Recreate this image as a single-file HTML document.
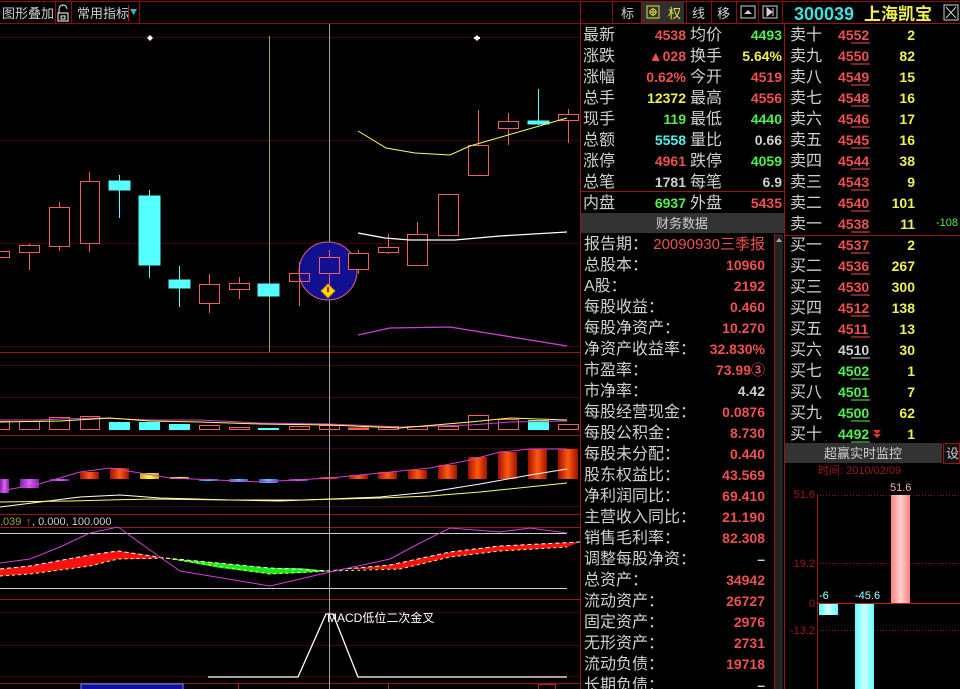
<!DOCTYPE html>
<html><head><meta charset="utf-8"><style>
html,body{margin:0;padding:0;background:#000;width:960px;height:689px;overflow:hidden}
svg{display:block;font-family:"Liberation Sans","Noto Sans CJK SC",sans-serif}
</style></head><body>
<svg width="960" height="689" viewBox="0 0 960 689" xmlns="http://www.w3.org/2000/svg">
<defs>
<linearGradient id="og" x1="0" x2="1" y1="0" y2="0"><stop offset="0" stop-color="#a01000"/><stop offset="0.5" stop-color="#ff5a10"/><stop offset="1" stop-color="#a01000"/></linearGradient>
<linearGradient id="mg" x1="0" x2="1"><stop offset="0" stop-color="#8020a0"/><stop offset="0.5" stop-color="#e060ff"/><stop offset="1" stop-color="#8020a0"/></linearGradient>
<linearGradient id="yg" x1="0" x2="1"><stop offset="0" stop-color="#d0a000"/><stop offset="0.5" stop-color="#ffff40"/><stop offset="1" stop-color="#d0a000"/></linearGradient>
<linearGradient id="bg" x1="0" x2="1"><stop offset="0" stop-color="#2060c0"/><stop offset="0.5" stop-color="#60d0ff"/><stop offset="1" stop-color="#2060c0"/></linearGradient>
<linearGradient id="pk" x1="0" x2="1"><stop offset="0" stop-color="#ff8080"/><stop offset="0.5" stop-color="#ffd0d0"/><stop offset="1" stop-color="#ff8080"/></linearGradient>
<linearGradient id="cy" x1="0" x2="1"><stop offset="0" stop-color="#60ffff"/><stop offset="0.5" stop-color="#d0ffff"/><stop offset="1" stop-color="#60ffff"/></linearGradient>
</defs>

<line x1="0" y1="1.5" x2="960" y2="1.5" stroke="#8a1010"/>
<line x1="0" y1="23.5" x2="580" y2="23.5" stroke="#8a1010"/>
<line x1="55.5" y1="2" x2="55.5" y2="23" stroke="#8a1010"/>
<line x1="71.5" y1="2" x2="71.5" y2="23" stroke="#8a1010"/>
<line x1="139.5" y1="2" x2="139.5" y2="23" stroke="#8a1010"/>
<text x="2" y="18" fill="#d0d0d0" font-size="13">图形叠加</text>
<path d="M59 13 v-4 a4 4 0 0 1 8 0 M58 13 h10 v8 h-10z M61 16 h4 v3 h-4z" stroke="#d0d0d0" fill="none" stroke-width="1.2"/>
<text x="77" y="18" fill="#d0d0d0" font-size="13">常用指标</text>
<line x1="128.5" y1="5" x2="128.5" y2="21" stroke="#c02020"/>
<path d="M130 9 h7 l-3.5 6z" fill="#20c0c0"/>

<g stroke="#3a0808">
<line x1="0" y1="37.5" x2="580" y2="37.5"/><line x1="0" y1="140.5" x2="580" y2="140.5"/>
<line x1="0" y1="243.5" x2="580" y2="243.5"/><line x1="0" y1="346.5" x2="580" y2="346.5"/>
<line x1="0" y1="365.5" x2="580" y2="365.5"/><line x1="0" y1="397.5" x2="580" y2="397.5"/>
<line x1="0" y1="448.5" x2="580" y2="448.5"/><line x1="0" y1="612.5" x2="580" y2="612.5"/>
<line x1="0" y1="645.5" x2="580" y2="645.5"/><line x1="0" y1="676.5" x2="580" y2="676.5"/>
<line x1="0" y1="506.5" x2="580" y2="506.5"/>
</g>
<g stroke="#9a1515">
<line x1="0" y1="352.5" x2="580" y2="352.5"/><line x1="0" y1="435.5" x2="580" y2="435.5"/>
<line x1="0" y1="514.5" x2="580" y2="514.5"/><line x1="0" y1="527.5" x2="580" y2="527.5"/>
<line x1="0" y1="599.5" x2="580" y2="599.5"/><line x1="0" y1="683.5" x2="580" y2="683.5"/>
</g>
<line x1="269.5" y1="36" x2="269.5" y2="352" stroke="#a0a040"/>
<line x1="329.5" y1="24" x2="329.5" y2="689" stroke="#a0a0a0"/>
<path d="M150 35 l3 3 -3 3 -3 -3z" fill="#fff"/>
<path d="M477 35 l3 3 -3 3 -3 -3z M474 37h6v2h-6z" fill="#fff"/>

<ellipse cx="328" cy="271" rx="29" ry="29" fill="#101090" stroke="#e06080"/>

<g stroke="#f06060" fill="none">
<rect x="-2.5" y="251.5" width="12" height="6"/>
<line x1="29.5" y1="244" x2="29.5" y2="270"/><rect x="19.5" y="245.5" width="20" height="7" fill="#000"/>
<line x1="59.5" y1="202" x2="59.5" y2="251"/><rect x="49.5" y="207.5" width="20" height="39" fill="#000"/>
<line x1="89.5" y1="172" x2="89.5" y2="252"/><rect x="80.5" y="181.5" width="19" height="62" fill="#000"/>
<line x1="209.5" y1="274" x2="209.5" y2="313"/><rect x="199.5" y="284.5" width="20" height="19" fill="#000"/>
<line x1="239.5" y1="277" x2="239.5" y2="299"/><rect x="229.5" y="283.5" width="20" height="6" fill="#000"/>
<line x1="299.5" y1="262" x2="299.5" y2="306"/><rect x="289.5" y="273.5" width="20" height="8" fill="none"/>
<line x1="329.5" y1="250" x2="329.5" y2="292"/><rect x="319.5" y="257.5" width="20" height="16" fill="#101090"/>
<line x1="358.5" y1="250" x2="358.5" y2="274"/><rect x="348.5" y="253.5" width="20" height="16" fill="#000"/>
<line x1="388.5" y1="234" x2="388.5" y2="254"/><rect x="378.5" y="247.5" width="20" height="5" fill="#000"/>
<line x1="417.5" y1="222" x2="417.5" y2="234"/><rect x="407.5" y="234.5" width="20" height="31" fill="#000"/>
<rect x="438.5" y="194.5" width="20" height="41"/>
<line x1="478.5" y1="110" x2="478.5" y2="145"/><rect x="468.5" y="145.5" width="20" height="30" fill="#000"/>
<line x1="508.5" y1="113" x2="508.5" y2="145"/><rect x="498.5" y="121.5" width="20" height="7" fill="#000"/>
<line x1="568.5" y1="109" x2="568.5" y2="143"/><rect x="558.5" y="114.5" width="20" height="6" fill="#000"/>
</g>
<g fill="#55ffff" stroke="#55ffff">
<line x1="119.5" y1="175" x2="119.5" y2="218"/><rect x="109" y="181" width="21" height="9"/>
<line x1="149.5" y1="190" x2="149.5" y2="278"/><rect x="139" y="196" width="21" height="69"/>
<line x1="179.5" y1="266" x2="179.5" y2="307"/><rect x="169" y="280" width="21" height="8"/>
<rect x="258" y="284" width="21" height="12"/>
<line x1="538.5" y1="89" x2="538.5" y2="125"/><rect x="528" y="121" width="21" height="3"/>
</g>
<path d="M328 284 l7 7 -7 7 -7 -7z" fill="#ffe000" stroke="#c08000"/>
<rect x="327" y="287" width="2" height="5" fill="#e00000"/>
<polyline points="358,131 386,148 415,153 450,155 470,146 567,118" fill="none" stroke="#ffff60"/>
<polyline points="358,233 385,238 410,240 455,240 500,236 567,232" fill="none" stroke="#ffffff" stroke-width="1.3"/>
<polyline points="358,335 390,328 450,327 567,346" fill="none" stroke="#d040d0" stroke-width="1.3"/>

<g stroke="#f06060" fill="none">
<rect x="-2.5" y="421.5" width="12" height="8"/><rect x="19.5" y="421.5" width="20" height="8"/>
<rect x="49.5" y="417.5" width="20" height="12"/><rect x="80.5" y="416.5" width="19" height="13"/>
<rect x="199.5" y="425.5" width="20" height="4"/><rect x="229.5" y="427.5" width="20" height="2"/>
<rect x="289.5" y="426.5" width="20" height="3"/><rect x="319.5" y="425.5" width="20" height="4"/>
<rect x="348.5" y="428" width="20" height="1.5" fill="#f06060"/>
<rect x="378.5" y="426.5" width="20" height="3"/><rect x="407.5" y="426.5" width="20" height="3"/>
<rect x="438.5" y="426.5" width="20" height="3"/><rect x="468.5" y="415.5" width="20" height="14"/>
<rect x="498.5" y="419.5" width="20" height="10"/><rect x="558.5" y="424.5" width="20" height="5"/>
</g>
<g fill="#55ffff"><rect x="109" y="422" width="21" height="8"/><rect x="139" y="422" width="21" height="8"/><rect x="169" y="424" width="21" height="6"/><rect x="258" y="428" width="21" height="2"/><rect x="528" y="420" width="21" height="10"/></g>
<rect x="528" y="420" width="21" height="3" fill="#60ff90"/>
<polyline points="0,420 40,420 60,419 100,418 150,420 200,420 260,423 330,424 400,427 470,425 510,422 567,421" fill="none" stroke="#d040d0"/>
<polyline points="0,422 60,421 110,418 150,421 200,422 260,424 330,425 400,428 470,422 510,418 567,420" fill="none" stroke="#ffff60"/>

<rect x="0" y="479" width="9" height="14" fill="url(#mg)"/>
<rect x="20" y="479" width="19" height="9" fill="url(#mg)"/>
<rect x="50" y="479" width="19" height="2" fill="url(#mg)"/>
<rect x="80" y="472" width="19" height="7" fill="url(#og)"/>
<rect x="110" y="468" width="19" height="11" fill="url(#og)"/>
<rect x="140" y="473" width="19" height="6" fill="url(#yg)"/>
<rect x="170" y="477" width="19" height="2" fill="url(#yg)"/>
<rect x="199" y="479" width="19" height="2" fill="url(#bg)"/>
<rect x="229" y="479" width="19" height="3" fill="url(#bg)"/>
<rect x="259" y="479" width="19" height="4" fill="url(#bg)"/>
<rect x="289" y="479" width="19" height="2" fill="url(#mg)"/>
<rect x="319" y="477" width="19" height="2" fill="url(#og)"/>
<rect x="349" y="475" width="19" height="4" fill="url(#og)"/>
<rect x="378" y="472" width="19" height="7" fill="url(#og)"/>
<rect x="408" y="470" width="19" height="9" fill="url(#og)"/>
<rect x="438" y="465" width="19" height="14" fill="url(#og)"/>
<rect x="468" y="457" width="19" height="22" fill="url(#og)"/>
<rect x="498" y="452" width="19" height="27" fill="url(#og)"/>
<rect x="528" y="449" width="19" height="30" fill="url(#og)"/>
<rect x="558" y="449" width="20" height="30" fill="url(#og)"/>
<polyline points="0,491 39,484 80,472 110,468 140,473 170,478 260,482 330,478 380,473 430,468 470,460 500,452 530,449 567,449" fill="none" stroke="#d040d0"/>
<polyline points="0,507 40,502 80,497 120,495 160,498 230,500 280,501 330,499 380,497 430,492 480,484 530,475 567,469" fill="none" stroke="#fff"/>
<polyline points="0,502 70,501 150,499 230,500 300,500 380,498 430,496 480,492 567,483" fill="none" stroke="#ffff60"/>
<text x="0" y="525" font-size="11" fill="#a0a040">.039</text>
<text x="26" y="525" font-size="11" fill="#f05050">↑</text>
<text x="32" y="525" font-size="11" fill="#d0d0d0">, 0.000, 100.000</text>

<line x1="0" y1="533.5" x2="567" y2="533.5" stroke="#d0d0d0"/>
<line x1="0" y1="588.5" x2="567" y2="588.5" stroke="#d0d0d0"/>
<polygon points="0,569 30,566 90,555 118,551 140,554 165,558 140,559 118,559 90,566 30,574 0,576" fill="#ff1010"/>
<polygon points="165,558 220,563 270,568 300,568 330,571 300,573 270,574 220,568" fill="#10ee10"/>
<polygon points="345,569 390,565 450,552 500,546 580,542 567,547 500,551 450,557 400,569" fill="#ff1010"/>
<polyline points="0,569 30,566 90,555 118,551 165,558 270,568 330,571 345,569 390,565 450,552 500,546 580,542" fill="none" stroke="#fff" stroke-dasharray="4,3"/>
<polyline points="0,576 30,574 90,566 118,559 165,558 270,574 330,571 400,569 450,557 500,551 567,547" fill="none" stroke="#ffff60" stroke-dasharray="3,3"/>
<polyline points="0,563 30,559 60,547 90,533 118,527 150,550 180,571 270,586 330,572 390,559 420,543 450,528 500,532 530,528 567,533" fill="none" stroke="#d040d0"/>

<polyline points="208,677 298,677 326,614 333,614 358,677 567,677" fill="none" stroke="#fff" stroke-width="1.3"/>
<text x="327" y="622" font-size="12" fill="#fff">MACD低位二次金叉</text>
<rect x="81" y="684" width="102" height="6" fill="#1010a0" stroke="#8080ff"/>
<line x1="238.5" y1="683" x2="238.5" y2="689" stroke="#c02020"/>
<line x1="388.5" y1="683" x2="388.5" y2="689" stroke="#c02020"/>
<rect x="538.5" y="684.5" width="17" height="6" fill="none" stroke="#c02020"/>

<line x1="580.5" y1="2" x2="580.5" y2="689" stroke="#9a1515"/>
<line x1="784.5" y1="24" x2="784.5" y2="689" stroke="#9a1515"/>
<line x1="580" y1="23.5" x2="960" y2="23.5" stroke="#9a1515"/>

<g font-size="13" fill="#d0d0d0">
<line x1="612.5" y1="2" x2="612.5" y2="23" stroke="#8a1010"/>
<text x="621" y="18">标</text>
<line x1="641.5" y1="2" x2="641.5" y2="23" stroke="#8a1010"/>
<rect x="642" y="2" width="42" height="21" fill="#303030"/>
<rect x="647" y="6" width="12" height="12" fill="none" stroke="#e0e040"/>
<path d="M653 8 v8 M649 12 h8" stroke="#e0e040"/>
<circle cx="653" cy="12" r="3" fill="none" stroke="#e0e040"/>
<text x="668" y="18" fill="#e0e040">权</text>
<line x1="686.5" y1="2" x2="686.5" y2="23" stroke="#8a1010"/>
<text x="692" y="18">线</text>
<line x1="711.5" y1="2" x2="711.5" y2="23" stroke="#8a1010"/>
<text x="717" y="18">移</text>
<line x1="736.5" y1="2" x2="736.5" y2="23" stroke="#8a1010"/>
<rect x="741" y="6" width="14" height="12" fill="none" stroke="#d0d0d0"/>
<path d="M744 14 l4 -4 4 4z" fill="#d0d0d0"/>
<line x1="758.5" y1="2" x2="758.5" y2="23" stroke="#8a1010"/>
<rect x="763" y="6" width="14" height="12" fill="none" stroke="#d0d0d0"/>
<path d="M767 8 l5 4 -5 4z M773 8 v8" fill="#d0d0d0" stroke="#d0d0d0"/>
<line x1="782.5" y1="2" x2="782.5" y2="23" stroke="#8a1010"/>
</g>
<text x="794" y="20" font-size="18" font-weight="bold" fill="#40e0e0">300039</text>
<text x="864" y="20" font-size="17" font-weight="bold" fill="#f0f050">上海凯宝</text>
<rect x="944" y="5" width="14" height="15" fill="none" stroke="#d0d0d0"/>
<path d="M946 7 l10 11 M956 7 l-10 11" stroke="#d0d0d0"/>

<g font-size="16" fill="#d0d0d0">
<text x="583" y="40">最新</text><text x="690" y="40">均价</text>
<text x="583" y="61">涨跌</text><text x="690" y="61">换手</text>
<text x="583" y="82">涨幅</text><text x="690" y="82">今开</text>
<text x="583" y="103">总手</text><text x="690" y="103">最高</text>
<text x="583" y="124">现手</text><text x="690" y="124">最低</text>
<text x="583" y="145">总额</text><text x="690" y="145">量比</text>
<text x="583" y="166">涨停</text><text x="690" y="166">跌停</text>
<text x="583" y="187">总笔</text><text x="690" y="187">每笔</text>
<text x="583" y="208">内盘</text><text x="690" y="208">外盘</text>
</g>
<g font-size="14" font-weight="bold" text-anchor="end">
<text x="686" y="40" fill="#f05050">4538</text><text x="782" y="40" fill="#50f050">4493</text>
<text x="686" y="61" fill="#f05050">▲028</text><text x="782" y="61" fill="#f0f050">5.64%</text>
<text x="686" y="82" fill="#f05050">0.62%</text><text x="782" y="82" fill="#f05050">4519</text>
<text x="686" y="103" fill="#f0f050">12372</text><text x="782" y="103" fill="#f05050">4556</text>
<text x="686" y="124" fill="#50f050">119</text><text x="782" y="124" fill="#50f050">4440</text>
<text x="686" y="145" fill="#50f0f0">5558</text><text x="782" y="145" fill="#d0d0d0">0.66</text>
<text x="686" y="166" fill="#f05050">4961</text><text x="782" y="166" fill="#50f050">4059</text>
<text x="686" y="187" fill="#d0d0d0">1781</text><text x="782" y="187" fill="#d0d0d0">6.9</text>
<text x="686" y="208" fill="#50f050">6937</text><text x="782" y="208" fill="#f05050">5435</text>
</g>
<line x1="580" y1="191.5" x2="784" y2="191.5" stroke="#9a1515"/>
<rect x="581" y="213" width="203" height="20" fill="#333"/>
<text x="682" y="228" font-size="13" fill="#d0d0d0" text-anchor="middle">财务数据</text>

<rect x="775" y="234" width="8" height="455" fill="#222"/>
<path d="M776 242 l3 -4 3 4z" fill="#aaa"/>
<line x1="774.5" y1="234" x2="774.5" y2="689" stroke="#9a1515"/>
<g font-size="16" fill="#d0d0d0">
<text x="584" y="249">报告期：</text><text x="584" y="270">总股本：</text><text x="584" y="291">A股：</text>
<text x="584" y="312">每股收益：</text><text x="584" y="333">每股净资产：</text><text x="584" y="354">净资产收益率：</text>
<text x="584" y="375">市盈率：</text><text x="584" y="396">市净率：</text><text x="584" y="417">每股经营现金：</text>
<text x="584" y="438">每股公积金：</text><text x="584" y="459">每股未分配：</text><text x="584" y="480">股东权益比：</text>
<text x="584" y="501">净利润同比：</text><text x="584" y="522">主营收入同比：</text><text x="584" y="543">销售毛利率：</text>
<text x="584" y="564">调整每股净资：</text><text x="584" y="585">总资产：</text><text x="584" y="606">流动资产：</text>
<text x="584" y="627">固定资产：</text><text x="584" y="648">无形资产：</text><text x="584" y="669">流动负债：</text>
<text x="584" y="690">长期负债：</text>
</g>
<g font-size="14" font-weight="bold" fill="#f05050" text-anchor="end">
<text x="765" y="249" font-weight="normal" font-size="15">20090930三季报</text>
<text x="765" y="270">10960</text><text x="765" y="291">2192</text><text x="765" y="312">0.460</text>
<text x="765" y="333">10.270</text><text x="765" y="354">32.830%</text><text x="765" y="375">73.99③</text>
<text x="765" y="396" fill="#d0d0d0">4.42</text><text x="765" y="417">0.0876</text><text x="765" y="438">8.730</text>
<text x="765" y="459">0.440</text><text x="765" y="480">43.569</text><text x="765" y="501">69.410</text>
<text x="765" y="522">21.190</text><text x="765" y="543">82.308</text><text x="765" y="564" fill="#d0d0d0">–</text>
<text x="765" y="585">34942</text><text x="765" y="606">26727</text><text x="765" y="627">2976</text>
<text x="765" y="648">2731</text><text x="765" y="669">19718</text><text x="765" y="690" fill="#d0d0d0">–</text>
</g>

<g font-size="16" fill="#d0d0d0">
<text x="790" y="40">卖十</text><text x="790" y="61">卖九</text><text x="790" y="82">卖八</text><text x="790" y="103">卖七</text>
<text x="790" y="124">卖六</text><text x="790" y="145">卖五</text><text x="790" y="166">卖四</text><text x="790" y="187">卖三</text>
<text x="790" y="208">卖二</text><text x="790" y="229">卖一</text>
<text x="790" y="250">买一</text><text x="790" y="271">买二</text><text x="790" y="292">买三</text><text x="790" y="313">买四</text>
<text x="790" y="334">买五</text><text x="790" y="355">买六</text><text x="790" y="376">买七</text><text x="790" y="397">买八</text>
<text x="790" y="418">买九</text><text x="790" y="439">买十</text>
</g>
<line x1="785" y1="235.5" x2="960" y2="235.5" stroke="#9a1515"/>
<g font-size="14" font-weight="bold" fill="#f05050">
<text x="838" y="40">4552</text><text x="838" y="61">4550</text><text x="838" y="82">4549</text><text x="838" y="103">4548</text>
<text x="838" y="124">4546</text><text x="838" y="145">4545</text><text x="838" y="166">4544</text><text x="838" y="187">4543</text>
<text x="838" y="208">4540</text><text x="838" y="229">4538</text>
<text x="838" y="250">4537</text><text x="838" y="271">4536</text><text x="838" y="292">4530</text><text x="838" y="313">4512</text>
<text x="838" y="334">4511</text><text x="838" y="355" fill="#d0d0d0">4510</text><text x="838" y="376" fill="#50f050">4502</text>
<text x="838" y="397" fill="#50f050">4501</text><text x="838" y="418" fill="#50f050">4500</text><text x="838" y="439" fill="#50f050">4492</text>
</g>
<g stroke-width="1">
<path d="M851 43h19M851 64h19M851 85h19M851 106h19M851 127h19M851 148h19M851 169h19M851 190h19M851 211h19M851 232h19M851 253h19M851 274h19M851 295h19M851 316h19M851 337h19" stroke="#f05050"/>
<path d="M851 358h19" stroke="#d0d0d0"/>
<path d="M851 379h19M851 400h19M851 421h19M851 442h19" stroke="#50f050"/>
</g>
<path d="M873 430 l4 4 4 -4z M873 434 l4 4 4 -4z" fill="#f03030"/>
<g font-size="14" font-weight="bold" fill="#f0f050" text-anchor="end">
<text x="915" y="40">2</text><text x="915" y="61">82</text><text x="915" y="82">15</text><text x="915" y="103">16</text>
<text x="915" y="124">17</text><text x="915" y="145">16</text><text x="915" y="166">38</text><text x="915" y="187">9</text>
<text x="915" y="208">101</text><text x="915" y="229">11</text>
<text x="915" y="250">2</text><text x="915" y="271">267</text><text x="915" y="292">300</text><text x="915" y="313">138</text>
<text x="915" y="334">13</text><text x="915" y="355">30</text><text x="915" y="376">1</text><text x="915" y="397">7</text>
<text x="915" y="418">62</text><text x="915" y="439">1</text>
</g>
<text x="958" y="226" font-size="11" fill="#50f050" text-anchor="end">-108</text>

<rect x="785" y="443" width="157" height="20" fill="#333"/>
<text x="863" y="458" font-size="13" fill="#d0d0d0" text-anchor="middle">超赢实时监控</text>
<rect x="943.5" y="443.5" width="16" height="20" fill="#111" stroke="#9a1515"/>
<text x="946" y="458" font-size="13" fill="#d0d0d0">设</text>
<text x="818" y="474" font-size="11" fill="#a01818">时间: 2010/02/09</text>
<g font-size="11" fill="#a01818" text-anchor="end">
<text x="815" y="498">51.6</text><text x="815" y="567">19.2</text><text x="815" y="607">0</text><text x="815" y="634">-13.2</text>
</g>
<line x1="817.5" y1="494" x2="817.5" y2="689" stroke="#9a1515"/>
<g stroke="#9a1515" stroke-dasharray="1,2">
<line x1="817" y1="495.5" x2="960" y2="495.5"/><line x1="817" y1="563.5" x2="960" y2="563.5"/><line x1="817" y1="630.5" x2="960" y2="630.5"/>
</g>
<line x1="817" y1="603.5" x2="960" y2="603.5" stroke="#c02020"/>
<rect x="819" y="604" width="19" height="11" fill="url(#cy)"/>
<rect x="855" y="604" width="19" height="85" fill="url(#cy)"/>
<rect x="891" y="495" width="19" height="108" fill="url(#pk)"/>
<g font-size="11" fill="#a0ffff"><text x="819" y="599">-6</text><text x="855" y="599">-45.6</text></g>
<text x="890" y="491" font-size="11" fill="#ffb0b0">51.6</text>
</svg>
</body></html>
